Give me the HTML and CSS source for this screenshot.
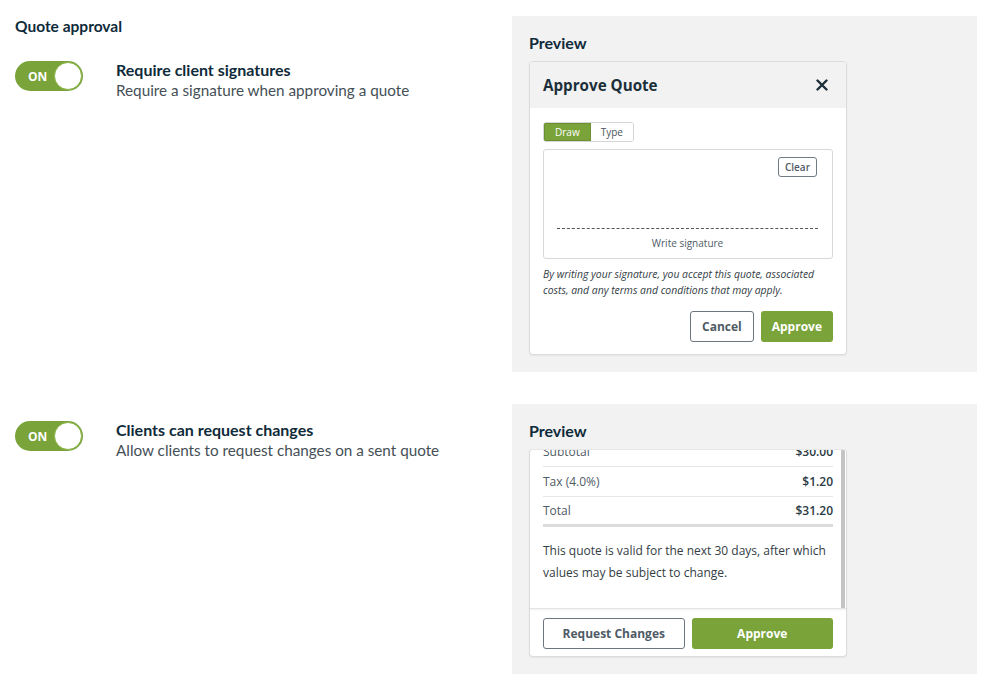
FILE: index.html
```html
<!DOCTYPE html>
<html>
<head>
<meta charset="utf-8">
<link rel="stylesheet" href="styles.css">
</head>
<body>
<div class="page">
  <section class="section first">
    <div class="left">
      <h2 class="heading">Quote approval</h2>
      <div class="setting">
        <div class="toggle"><span class="toggle-label">ON</span><span class="knob"></span></div>
        <div class="setting-text">
          <div class="setting-title">Require client signatures</div>
          <div class="setting-desc">Require a signature when approving a quote</div>
        </div>
      </div>
    </div>
    <div class="panel">
      <div class="panel-title">Preview</div>
      <div class="card">
        <div class="modal-head">
          <span class="modal-title">Approve Quote</span>
          <svg class="close" width="12" height="12" viewBox="0 0 12 12"><path d="M1.5 1.5 L10.5 10.5 M10.5 1.5 L1.5 10.5" stroke="#1b2f3a" stroke-width="2.4" stroke-linecap="round"/></svg>
        </div>
        <div class="modal-body">
          <div class="seg">
            <span class="seg-item active">Draw</span><span class="seg-item">Type</span>
          </div>
          <div class="sigbox">
            <div class="sig-top"><span class="clear">Clear</span></div>
            <div class="sig-line"></div>
            <div class="sig-label">Write signature</div>
          </div>
          <p class="legal">By writing your signature, you accept this quote, associated costs, and any terms and conditions that may apply.</p>
          <div class="actions">
            <span class="btn btn-outline">Cancel</span>
            <span class="btn btn-green">Approve</span>
          </div>
        </div>
      </div>
    </div>
  </section>

  <section class="section second">
    <div class="left">
      <div class="setting">
        <div class="toggle"><span class="toggle-label">ON</span><span class="knob"></span></div>
        <div class="setting-text">
          <div class="setting-title">Clients can request changes</div>
          <div class="setting-desc">Allow clients to request changes on a sent quote</div>
        </div>
      </div>
    </div>
    <div class="panel">
      <div class="panel-title">Preview</div>
      <div class="card card2">
        <div class="scroll">
          <div class="scroll-content">
            <div class="row"><span class="row-label">Subtotal</span><span class="row-val">$30.00</span></div>
            <div class="row"><span class="row-label">Tax (4.0%)</span><span class="row-val">$1.20</span></div>
            <div class="row total"><span class="row-label">Total</span><span class="row-val">$31.20</span></div>
            <p class="valid">This quote is valid for the next 30 days, after which values may be subject to change.</p>
          </div>
          <div class="scrollbar"><div class="thumb"></div></div>
        </div>
        <div class="footer">
          <span class="btn btn-outline wide">Request Changes</span>
          <span class="btn btn-green wide">Approve</span>
        </div>
      </div>
    </div>
  </section>
</div>
</body>
</html>
```

FILE: styles.css
```css
* { box-sizing: border-box; }
html, body { margin: 0; padding: 0; background: #fff; }
body { font-family: "Lato", "Liberation Sans", sans-serif; color: #0f2b3a; }

.page { padding: 16px 9px 0 15px; }

.section { display: grid; grid-template-columns: 497px 465px; }
.section.second { margin-top: 32px; }

.left { display: flex; flex-direction: column; }
.section.second .left { padding-top: 17px; }

.heading { margin: 0; font-size: 15.5px; line-height: 20px; font-weight: 700; color: #0f2b3a; }
.section.first .setting { margin-top: 25px; }

.setting { display: flex; align-items: flex-start; gap: 33px; }
.toggle {
  width: 68px; height: 30px; border-radius: 15px; background: #7aa33a;
  display: flex; align-items: center; justify-content: space-between;
  padding: 0 1px 0 13px; flex: none;
}
.toggle-label { color: #fff; font-family: "Open Sans", sans-serif; font-weight: 700; font-size: 12px; }
.knob { width: 28px; height: 28px; border-radius: 50%; background: #fff; border: 1.5px solid #8ab34a; }

.setting-text { display: flex; flex-direction: column; margin-top: -1px; }
.setting-title { font-size: 16px; line-height: 20px; font-weight: 700; color: #0f2b3a; }
.setting-desc { font-size: 15.25px; line-height: 20px; color: #454f56; }

.panel { background: #f2f2f2; padding: 18px 130px 17px 17px; }
.panel-title { font-size: 16px; line-height: 18px; font-weight: 700; color: #0f2b3a; }

.card {
  margin-top: 9px; width: 318px; background: #fff;
  border: 1px solid #dcdcdc; border-radius: 4px; box-shadow: 0 1px 2px rgba(0,0,0,0.06);
  font-family: "Open Sans", sans-serif; overflow: hidden;
}

.modal-head {
  height: 46px; background: #f2f2f2; display: flex; align-items: center; justify-content: space-between;
  padding: 0 18px 0 13px;
}
.modal-title { font-size: 15.2px; font-weight: 700; color: #1b2f3a; }

.modal-body { padding: 14px 13px 12px 13px; }
.seg { display: flex; width: fit-content; border: 1px solid #d6d6d6; border-radius: 3px; overflow: hidden; }
.seg-item { font-size: 10px; line-height: 18px; height: 18px; padding: 0 10px; color: #4b5660; background: #fff; }
.seg-item.active { background: #7aa33a; color: #fff; padding: 0 11px; box-shadow: inset 0 0 0 1px #6a9030; }

.sigbox {
  margin-top: 7px; height: 110px; border: 1px solid #d8d8d8; border-radius: 3px;
  display: flex; flex-direction: column; padding: 7px 14px 0 13px;
}
.sig-top { display: flex; justify-content: flex-end; }
.clear {
  font-size: 10px; font-weight: 600; color: #4f5b66; border: 1px solid #6f7a84; border-radius: 3px;
  padding: 0 6px; line-height: 18px; height: 20px; margin-right: 1px;
}
.sig-line { margin-top: 51px; border-top: 1px dashed #555; }
.sig-label { text-align: center; font-size: 10px; line-height: 14px; color: #4f5b66; margin-top: 7px; }

.legal { margin: 7px 0 0; font-size: 10.4px; line-height: 16px; font-style: italic; color: #333d44; }

.actions { display: flex; justify-content: flex-end; gap: 7px; margin-top: 13px; }
.btn {
  display: inline-flex; align-items: center; justify-content: center; height: 31px;
  font-size: 12px; font-weight: 700; border-radius: 3px; padding: 0 11px;
}
.btn-outline { border: 1px solid #6b7680; color: #4f5b66; background: #fff; }
.btn-green { background: #7aa33a; color: #fff; }

.card2 { height: 208px; display: flex; flex-direction: column; border-top-color: #e6e6e6; }
.scroll {
  height: 159px; display: flex; overflow: hidden;
  border-bottom: 1px solid #e4e4e4; box-shadow: 0 1px 2px rgba(0,0,0,0.06);
}
.scroll-content { flex: 1; padding: 0 8px 0 13px; margin-top: -13px; }
.row {
  display: flex; justify-content: space-between; height: 30px; align-items: center;
  border-bottom: 1px solid #e6e6e6; font-size: 12px;
}
.row-label { color: #4f5b66; }
.row-val { color: #2b3a44; font-weight: 600; }
.row.total { border-bottom: 3px solid #dcdcdc; }
.valid { margin: 13px 0 0; font-size: 12px; line-height: 22px; color: #333d44; }

.scrollbar { width: 5px; margin-right: 0; background: #fff; display: flex; }
.thumb { width: 4px; background: #c4c4c4; flex: none; }

.footer { display: grid; grid-template-columns: 1fr 1fr; gap: 7px; padding: 9px 13px 7px 13px; }
.btn.wide { height: 31px; width: 100%; }
```
